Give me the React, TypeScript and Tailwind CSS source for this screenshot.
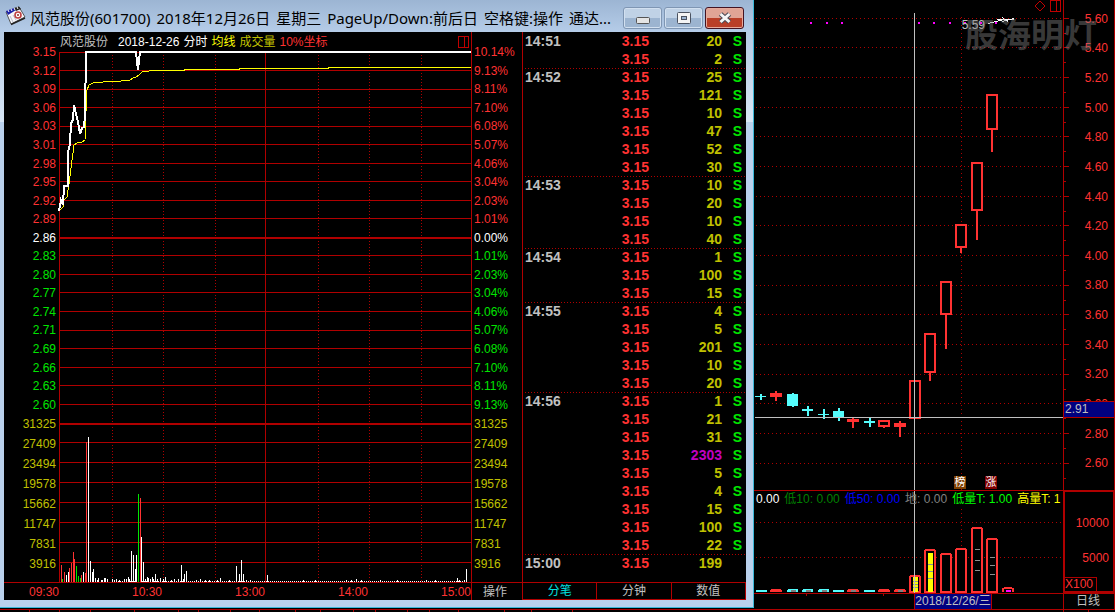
import { Fragment } from "react";

const LATIN = "font-['Liberation_Sans','Noto_Sans_CJK_SC',sans-serif]";

const PRICES = [
  ["3.15", "10.14%"], ["3.12", "9.13%"], ["3.09", "8.11%"], ["3.06", "7.10%"], ["3.03", "6.08%"],
  ["3.01", "5.07%"], ["2.98", "4.06%"], ["2.95", "3.04%"], ["2.92", "2.03%"], ["2.89", "1.01%"],
  ["2.86", "0.00%"], ["2.83", "1.01%"], ["2.80", "2.03%"], ["2.77", "3.04%"], ["2.74", "4.06%"],
  ["2.71", "5.07%"], ["2.69", "6.08%"], ["2.66", "7.10%"], ["2.63", "8.11%"], ["2.60", "9.13%"],
];
const VOLUMES = ["31325", "27409", "23494", "19578", "15662", "11747", "7831", "3916"];

const TITLE = ["风范股份(601700)", "2018年12月26日", "星期三", "PageUp/Down:前后日", "空格键:操作", "通达..."];

// time, volume, direction
const TICKS: [string, number, string][] = [
  ["14:51", 20, "S"], ["", 2, "S"],
  ["14:52", 25, "S"], ["", 121, "S"], ["", 10, "S"], ["", 47, "S"], ["", 52, "S"], ["", 30, "S"],
  ["14:53", 10, "S"], ["", 20, "S"], ["", 10, "S"], ["", 40, "S"],
  ["14:54", 1, "S"], ["", 100, "S"], ["", 15, "S"],
  ["14:55", 4, "S"], ["", 5, "S"], ["", 201, "S"], ["", 10, "S"], ["", 20, "S"],
  ["14:56", 1, "S"], ["", 21, "S"], ["", 31, "S"], ["", 2303, "S"], ["", 5, "S"], ["", 4, "S"],
  ["", 15, "S"], ["", 100, "S"], ["", 22, "S"],
  ["15:00", 199, ""],
];

// grid lines of the intraday plot, measured from its top edge
const GRID = [0, 18, 37, 55, 74, 92, 111, 129, 148, 166, 203, 222, 240, 259, 278, 296, 315, 333, 352, 390, 410, 430, 450, 470, 490, 510];

// minute volume: x, height, colour
const W = "#ffffff";
const R = "#ff3232";
const G = "#00e600";
const MINUTE_BARS: [number, number, string][] = [
  [2, 17, R], [3, 3, G], [5, 10, R], [7, 7, W], [9, 10, W], [10, 14, R], [12, 19, R], [14, 30, R],
  [15, 23, R], [17, 16, G], [19, 6, G], [21, 4, G], [22, 7, R], [24, 10, W], [26, 9, R], [27, 140, R],
  [29, 145, W], [31, 21, W], [33, 10, W], [34, 13, W], [36, 4, W], [38, 2, W], [39, 4, W], [42, 2, W],
  [43, 2, W], [45, 4, W], [46, 4, W], [48, 3, W], [53, 3, W], [55, 2, W], [57, 3, W], [60, 2, W],
  [65, 3, W], [67, 3, W], [69, 5, W], [70, 3, W], [72, 31, W], [74, 27, W], [76, 13, W], [77, 27, W],
  [79, 88, G], [81, 84, R], [82, 45, W], [84, 20, W], [86, 3, W], [88, 5, W], [89, 4, W], [91, 3, W],
  [93, 5, W], [94, 3, W], [96, 8, W], [98, 3, W], [101, 4, W], [104, 3, W], [106, 5, W], [112, 2, W],
  [115, 3, W], [119, 3, W], [122, 17, W], [124, 3, W], [125, 8, W], [127, 11, W], [137, 2, W],
  [141, 3, W], [146, 2, W], [150, 2, W], [158, 2, W], [161, 4, W], [170, 2, W], [177, 16, W],
  [180, 8, W], [182, 22, W], [184, 8, W], [187, 2, W], [191, 2, W], [208, 7, W], [244, 2, W],
  [256, 2, W], [287, 2, W], [292, 2, W], [297, 3, W], [302, 2, W], [321, 2, W], [338, 2, W],
  [367, 2, W], [376, 2, W], [398, 4, W], [400, 2, W], [405, 2, W], [407, 13, W],
];

// daily candles: x, body top, body bottom, low wick end, high wick start, kind
const CANDLES: [number, number, number, number, number, "up" | "down" | "flat"][] = [
  [1, 396, 397, 400, 394, "down"], [16, 393, 397, 401, 391, "flat"], [33, 394, 406, 407, 393, "down"],
  [48, 409, 411, 416, 406, "down"], [64, 414, 415, 419, 409, "down"], [79, 411, 417, 421, 408, "down"],
  [93, 419, 422, 428, 417, "flat"], [110, 421, 423, 427, 418, "down"], [124, 420, 427, 428, 420, "up"],
  [140, 423, 427, 437, 421, "flat"], [155, 380, 419, 419, 380, "up"], [170, 333, 373, 381, 333, "up"],
  [186, 281, 315, 349, 281, "up"], [201, 224, 248, 253, 224, "up"], [217, 162, 211, 240, 162, "up"],
  [232, 94, 130, 152, 94, "up"],
];

const DAILY_PRICES = ["5.60", "5.40", "5.20", "5.00", "4.80", "4.60", "4.40", "4.20", "4.00", "3.80", "3.60", "3.40", "3.20", "3.00", "2.80", "2.60"];
const DAILY_GRID = [18, 47, 77, 107, 136, 166, 196, 225, 255, 285, 314, 344, 374, 403, 433, 463];

// daily volume: x, top, colour
const DAILY_BARS: [number, number, string][] = [
  [155, 84, R], [170, 58, R], [186, 62, R], [201, 57, R], [217, 36, R], [232, 47, R],
];
const SMALL_BARS: [number, string, boolean][] = [
  [2, "#54fcfc", false], [16, R, false], [33, "#54fcfc", true], [48, "#54fcfc", true], [64, "#54fcfc", true],
  [79, "#54fcfc", false], [93, R, true], [110, "#54fcfc", false], [124, R, false], [140, R, true],
];

const STRIP_MARKS = [29, 59, 90, 134, 178, 198, 230, 259, 295, 320, 353, 375, 407, 429, 458, 504, 531, 572, 1063, 1088];

function rowColor(i: number) {
  if (i === 10) return "text-white";
  return i < 10 ? "text-[#ff3232]" : "text-[#00e600]";
}

function Axis({ side }: { side: 0 | 1 }) {
  return (
    <div className={side === 0 ? "flex w-[55px] shrink-0 flex-col pt-[11px] pr-[3px] pb-2" : "flex w-[50px] shrink-0 flex-col pt-[11px] pb-2 pl-[2px]"}>
      <div className="flex flex-1 flex-col">
        {PRICES.map((p, i) => (
          <span key={i} className={`flex flex-1 items-center ${side === 0 ? "justify-end" : ""} ${rowColor(i)}`}>
            {p[side]}
          </span>
        ))}
      </div>
      <div className="flex flex-col text-[#c0c000]">
        {VOLUMES.map((v) => (
          <span key={v} className={`flex h-5 items-center ${side === 0 ? "justify-end" : ""}`}>
            {v}
          </span>
        ))}
      </div>
    </div>
  );
}

function IntradayChart() {
  return (
    <svg className="min-h-0 w-full flex-1 overflow-visible" viewBox="0 0 412 530" preserveAspectRatio="none" shapeRendering="crispEdges">
      {GRID.map((y) => (
        <rect key={y} x="0" y={y} width="412" height="1" fill="#b00000" />
      ))}
      <rect x="0" y="185" width="412" height="2" fill="#b00000" />
      <rect x="0" y="371" width="412" height="2" fill="#b00000" />
      <rect x="0" y="0" width="1" height="530" fill="#b00000" />
      <rect x="206" y="0" width="1" height="530" fill="#b00000" />
      {[53, 104, 156, 259, 310, 362].map((x) => (
        <line key={x} x1={x + 0.5} x2={x + 0.5} y1="3" y2="530" stroke="#b00000" strokeDasharray="1 2" />
      ))}
      <path d="M53 529.5H407" stroke="#fff" strokeDasharray="1 1" />
      {MINUTE_BARS.map(([x, h, c]) => (
        <rect key={x} x={x} y={530 - h} width="1" height={h} fill={c} />
      ))}
      <path
        d="M1 158L4 155L5 148L8 145L10 132L12 116L14 101L15 93L18 91L23 90L26 88L27 60L28 38L30 33L34 31L44 30L62 29L71 28L74 26L77 25L80 23L83 20L94 18.5H125V17.5H180V16.5H269V15.5H412"
        fill="none"
        stroke="#ffff00"
      />
      <path
        d="M0 159L2 148L4 153L5 134H9V100L11 92L12 71L14 68L15 53L17 62L19 70L21 82L23 76L25 75L26 64L27 0H77L79 18L81 0H412"
        fill="none"
        stroke="#fff"
        strokeWidth="2"
      />
    </svg>
  );
}

function WindowIcon() {
  return (
    <svg className="h-5 w-[22px] shrink-0" viewBox="0 0 22 20">
      <path d="M1 6L14 1L20 11L6 18Z" fill="#f6f6fa" stroke="#555" strokeWidth="1" />
      <path d="M1 5L9 2L11 4L3 9Z" fill="#1c22a8" />
      <path d="M9 2L14 0.5L16 3L11 5Z" fill="#222" />
      <path d="M3 4l1 2M6 3l1 2M9 2l1 2M12 1l1 2" stroke="#fff" />
      <path d="M5 10l3 6M8 9l3 5" stroke="#b9bcc8" />
      <circle cx="13" cy="9" r="3" fill="#fff" stroke="#c04040" strokeWidth="1.6" />
      <circle cx="13" cy="9" r="1" fill="#8a3030" />
      <path d="M6 18.5L20 12" stroke="#222" strokeWidth="1.5" />
    </svg>
  );
}

function TitleBar() {
  const plain =
    "flex h-[22px] w-[39px] items-center justify-center rounded-[3px] border border-[#7f96b3] bg-linear-to-b from-[#c0d2e6] from-50% to-[#9cb4d0] to-50% shadow-[inset_0_0_0_1px_#d2e0f0]";
  return (
    <header className="flex h-8 items-center bg-linear-to-b from-[#9cb5d3] to-[#b5cce8] pl-[5px] font-['Noto_Sans','Noto_Sans_CJK_SC',sans-serif]">
      <WindowIcon />
      <h1 className="flex min-w-0 flex-1 gap-[6px] pt-1 pl-[3px] text-[15px] leading-6 whitespace-nowrap text-black">
        {TITLE.map((part) => (
          <span key={part}>{part}</span>
        ))}
      </h1>
      <div className="flex gap-[2px] pt-1 pr-[9px]">
        <button className={plain} aria-label="Minimize">
          <svg className="mt-[5px] h-[7px] w-[14px]" viewBox="0 0 14 7">
            <rect x="0.5" y="0.5" width="13" height="6" rx="1" fill="#e4e4e4" stroke="#555" />
          </svg>
        </button>
        <button className={plain} aria-label="Maximize">
          <svg className="h-3 w-[14px]" viewBox="0 0 14 12">
            <rect x="0.5" y="0.5" width="13" height="11" rx="1" fill="#f4f4f4" stroke="#4a5260" />
            <rect x="4.5" y="4.5" width="5" height="3" fill="#9db5d2" stroke="#4a5260" />
          </svg>
        </button>
        <button
          className="flex h-[22px] w-[39px] items-center justify-center rounded-[3px] border border-[#431422] bg-linear-to-b from-[#e0a596] from-50% to-[#b93f28] to-50% shadow-[inset_0_0_0_1px_#e6a99b]"
          aria-label="Close"
        >
          <svg className="h-3 w-[14px]" viewBox="0 0 14 12">
            <path d="M2.5 2L11.5 10M11.5 2L2.5 10" stroke="#4a4a55" strokeWidth="5" />
            <path d="M2.5 2L11.5 10M11.5 2L2.5 10" stroke="#f5f5f5" strokeWidth="3" />
          </svg>
        </button>
      </div>
    </header>
  );
}

function PanelIcon() {
  return (
    <svg className="h-3 w-[11px] shrink-0" viewBox="0 0 11 12" fill="none" stroke="#c00000" shapeRendering="crispEdges">
      <path d="M0.5 0.5H10.5V11.5H0.5ZM6.5 0.5V11.5" />
    </svg>
  );
}

function Intraday() {
  return (
    <section className="flex min-w-0 flex-1 flex-col text-xs leading-[18px]">
      <div className="flex min-h-0 flex-1">
        <Axis side={0} />
        <div className="flex min-w-0 flex-1 flex-col">
          <div className="flex h-5 items-center gap-1 pl-px whitespace-nowrap">
            <span className="pr-[6px] text-[#c0c0c0]">风范股份</span>
            <span className="text-white">2018-12-26</span>
            <span className="text-white">分时</span>
            <span className="text-[#ffff00]">均线</span>
            <span className="text-[#c0c000]">成交量</span>
            <span className="flex-1 text-[#ff3232]">10%坐标</span>
            <span className="pr-[2px]">
              <PanelIcon />
            </span>
          </div>
          <IntradayChart />
        </div>
        <div className="flex border-l border-[#b00000]">
          <Axis side={1} />
        </div>
      </div>
      <footer className="flex h-[18px] border-t border-[#b00000] text-right text-[#ff3232]">
        <span className="w-[55px]">09:30</span>
        <span className="flex-1">10:30</span>
        <span className="flex-1">13:00</span>
        <span className="flex-1">14:00</span>
        <span className="flex-1">15:00</span>
        <button className="w-[51px] border-l border-[#b00000] pr-1 text-center text-[#c0c0c0]">操作</button>
      </footer>
    </section>
  );
}

function TickList() {
  return (
    <section className="flex w-[224px] shrink-0 flex-col border-l border-[#b00000]">
      <table className="ml-[2px] table-fixed border-separate border-spacing-0 text-sm leading-[18px] font-bold">
        <tbody>
          {TICKS.map(([time, vol, dir], i) => (
            <tr
              key={i}
              className={
                time && i > 0
                  ? "h-[18px] bg-[repeating-linear-gradient(90deg,#b00000_0_1px,transparent_1px_3px)] bg-[length:100%_1px] bg-no-repeat"
                  : "h-[18px]"
              }
            >
              <td className="w-[80px] p-0 text-[#c0c0c0]">{time}</td>
              <td className="w-[44px] p-0 text-right text-[#ff3232]">3.15</td>
              <td className={`w-[73px] p-0 text-right ${vol > 500 ? "text-[#c000c0]" : "text-[#c0c000]"}`}>{vol}</td>
              <td className="p-0 pr-1 text-right text-[#00e600]">{dir}</td>
            </tr>
          ))}
        </tbody>
      </table>
      <nav className="mt-auto flex h-[18px] border-y border-r border-[#b00000] text-xs leading-4">
        <button className="flex-1 text-[#00e0e0]">分笔</button>
        <button className="flex-1 border-x border-[#b00000] text-[#c0c0c0]">分钟</button>
        <button className="flex-1 text-[#c0c0c0]">数值</button>
      </nav>
    </section>
  );
}

function DailyChart() {
  return (
    <svg className="absolute inset-0 h-full w-full" viewBox="0 0 309 490" preserveAspectRatio="none" shapeRendering="crispEdges">
      {DAILY_GRID.map((y) => (
        <line key={y} x1="2" x2="309" y1={y + 0.5} y2={y + 0.5} stroke="#b00000" strokeDasharray="1 3" />
      ))}
      <line x1="207.5" x2="207.5" y1="17" y2="490" stroke="#b00000" strokeDasharray="1 3" />
      {[56, 72, 87, 164, 179, 195, 210, 226, 241].map((x) => (
        <rect key={x} x={x} y="22" width="2" height="2" fill="#ff00ff" />
      ))}
      {CANDLES.map(([x, top, bottom, low, high, kind]) => (
        <Fragment key={x}>
          <rect x={x + 5} y={kind === "up" ? bottom : high} width="2" height={kind === "up" ? low - bottom : low - high} fill={kind === "down" ? "#54fcfc" : R} />
          {kind === "up" ? (
            <rect x={x + 1} y={top + 1} width="10" height={bottom - top - 2} fill="#000" stroke={R} strokeWidth="2" />
          ) : (
            <rect x={x} y={top} width={kind === "down" ? 11 : 12} height={bottom - top} fill={kind === "down" ? "#54fcfc" : R} />
          )}
        </Fragment>
      ))}
      <path d="M234 23.5L250 19.5M243 19.5H260M248 17.5L254 21.5M248 21.5L260 18.5" stroke="#fff" fill="none" />
      <rect x="160" y="13" width="1" height="477" fill="#c0c0c0" />
      <rect x="1" y="417" width="308" height="1" fill="#c0c0c0" />
    </svg>
  );
}

function DailyVolume() {
  return (
    <svg className="absolute inset-0 h-full w-full" viewBox="0 0 309 102" preserveAspectRatio="none" shapeRendering="crispEdges">
      <path d="M2 31.5H309M2 66.5H309M207.5 18V102" stroke="#b00000" strokeDasharray="1 3" />
      {SMALL_BARS.map(([x, c, marked]) => (
        <Fragment key={x}>
          <rect x={x} y="99" width={c === R ? 12 : 11} height="2" fill={c} />
          {(c === R || marked) && <rect x={x + 1} y="98" width="10" height="1" fill={c} />}
          {marked && <rect x={x + 4} y="99" width="5" height="2" fill="#808080" />}
        </Fragment>
      ))}
      {DAILY_BARS.map(([x, top, c]) => (
        <path key={x} d={`M${x + 1} 101V${top + 2}L${x + 2} ${top + 1}H${x + 10}L${x + 11} ${top + 2}V101Z`} fill="#000" stroke={c} strokeWidth="2" />
      ))}
      <rect x="159" y="86" width="5" height="15" fill="#ffff00" />
      <rect x="174" y="62" width="5" height="39" fill="#ffff00" />
      <path d="M159 90.5h5M159 93.5h5M159 96.5h5M174 73.5h5M174 80.5h5M174 87.5h5M221 58.5h5M221 69.5h5M221 79.5h5M236 66.5h5M236 74.5h5M236 83.5h5" stroke="#909090" />
      <path d="M249 101V98L251 97H257L259 98V101" stroke={R} strokeWidth="2" fill="none" />
      <rect x="252" y="99" width="5" height="2" fill="#ff00ff" />
      <rect x="160" y="0" width="1" height="102" fill="#c0c0c0" />
    </svg>
  );
}

function DailyPanel() {
  return (
    <section className="relative flex min-w-0 flex-1 flex-col border-r border-[#b00000] text-xs text-[#ff3232]">
      <div className="flex min-h-0 flex-1">
        <div className="relative min-w-0 flex-1">
          <DailyChart />
          <span className="absolute top-[18px] right-[78px] leading-[14px] text-[#c0c0c0]">5.59</span>
          <div className="absolute top-0 right-[2px] flex gap-1">
            <svg className="h-3 w-3" viewBox="0 0 12 12" fill="none" stroke="#c00000">
              <path d="M6 1L11 6L6 11L1 6Z" />
            </svg>
            <PanelIcon />
          </div>
          <div className="absolute right-[66px] bottom-px flex gap-[19px] text-center text-[11px] leading-[13px] text-white">
            <span className="w-3 bg-[#804000]">榜</span>
            <span className="w-3 bg-[#800000]">涨</span>
          </div>
        </div>
        <div className="relative flex w-[51px] shrink-0 flex-col border-l border-[#b00000] pt-1 pr-[6px] pb-3">
          <svg className="absolute inset-y-0 left-0 h-full w-[6px]" viewBox="0 0 6 490" preserveAspectRatio="none" shapeRendering="crispEdges">
            {DAILY_GRID.map((y) => (
              <path key={y} d={`M0 ${y + 0.5}H5M0 ${y + 15.5}H2`} stroke="#b00000" />
            ))}
          </svg>
          {DAILY_PRICES.map((p) => (
            <span key={p} className="flex flex-1 items-center justify-end">
              {p}
            </span>
          ))}
          <span className="absolute inset-x-0 bottom-[72px] h-[17px] border-y border-[#b00000] bg-[#000080] pl-px leading-[14px] text-[#c0c0c0]">2.91</span>
        </div>
      </div>
      <div className="flex h-[103px]">
        <div className="relative min-w-0 flex-1 overflow-hidden border-t border-[#b00000]">
          <DailyVolume />
          <p className="relative flex gap-[5px] pl-[2px] leading-4 whitespace-nowrap">
            <span className="text-white">0.00</span>
            <span className="text-[#008000]">低10: 0.00</span>
            <span className="text-[#0000ff]">低50: 0.00</span>
            <span className="text-[#808080]">地: 0.00</span>
            <span className="text-[#00ff00]">低量T: 1.00</span>
            <span className="text-[#ffff00]">高量T: 1</span>
          </p>
        </div>
        <div className="flex w-[51px] shrink-0 flex-col border-2 border-r border-[#b00000] text-right">
          <span className="pt-[22px] pr-1 leading-[18px]">10000</span>
          <span className="pt-[17px] pr-1 leading-[18px]">5000</span>
          <span className="mt-auto w-8 border-t border-r border-[#b00000] text-left leading-[13px]">X100</span>
        </div>
      </div>
      <div className="flex h-4 border-t border-[#b00000] text-[#c0c0c0]">
        <svg className="h-[3px] min-w-0 flex-1" viewBox="0 0 160 3" preserveAspectRatio="none" shapeRendering="crispEdges">
          <path d="M52.5 0V2M129.5 0V2" stroke="#b00000" />
        </svg>
        <span className="mr-[71px] w-[78px] border-x border-[#b00000] bg-[#000080] text-center leading-[14px] whitespace-nowrap">2018/12/26/三</span>
        <span className="w-[51px] border-l border-[#b00000] pr-[2px] text-center leading-[15px]">日线</span>
      </div>
      <div className="pointer-events-none absolute top-3 right-[17px] text-[33px] leading-[48px] font-bold text-[#808080]/45">股海明灯</div>
    </section>
  );
}

export default function App() {
  return (
    <div className={`flex h-screen min-h-[612px] flex-col overflow-hidden bg-black ${LATIN}`}>
      <div className="flex min-h-0 flex-1">
        <main className="mb-px flex min-w-0 flex-1 flex-col border-r border-b border-[#3cb8d8] bg-[linear-gradient(#a9c1de_0,#d8e6f5_122px,#bad1ec_122px)]">
          <TitleBar />
          <div className="mr-[7px] mb-[7px] ml-1 flex min-h-0 flex-1 bg-black">
            <Intraday />
            <TickList />
          </div>
        </main>
        <aside className="flex w-[361px] shrink-0">
          <DailyPanel />
        </aside>
      </div>
      <svg className="h-[3px] w-full shrink-0" viewBox="0 0 1115 3" preserveAspectRatio="none" shapeRendering="crispEdges">
        <path d="M0 0.5H1115" stroke="#b00000" />
        {STRIP_MARKS.map((x) => (
          <path key={x} d={`M${x + 0.5} 1V3`} stroke="#b00000" />
        ))}
      </svg>
    </div>
  );
}
